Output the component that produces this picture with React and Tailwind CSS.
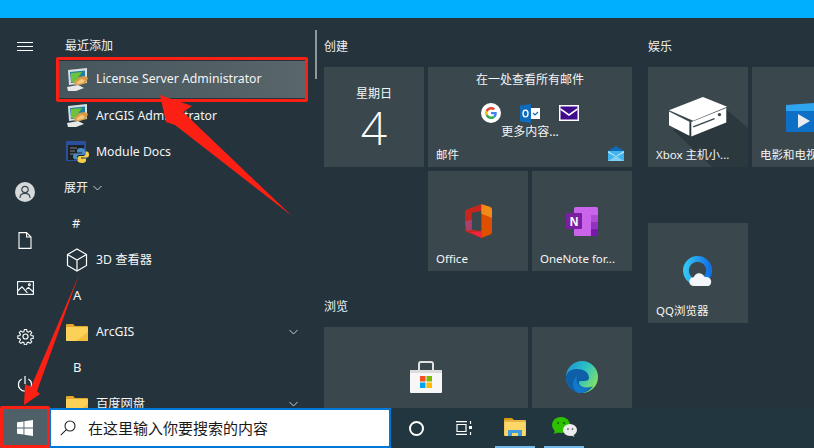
import React from 'react';

const FONT = "font-['Noto_Sans','Noto_Sans_CJK_SC',sans-serif]";

const Hamburger = () => (
  <svg width="16" height="9" viewBox="0 0 16 9" fill="none" stroke="#fff" strokeWidth="1">
    <path d="M0 .5h16M0 4.5h16M0 8.5h16" />
  </svg>
);

const UserAvatar = () => (
  <div className="w-5 h-5 rounded-full bg-[#d6d9da] flex items-center justify-center">
    <svg width="12" height="14" viewBox="0 0 12 14" fill="none" stroke="#3b474d" strokeWidth="1.2">
      <circle cx="6" cy="4.5" r="3.2" />
      <path d="M1 13c0-3 2-4.600 5-4.600s5 1.600 5 4.600" />
    </svg>
  </div>
);

const DocIcon = () => (
  <svg width="14" height="17" viewBox="0 0 14 17" fill="none" stroke="#fff" strokeWidth="1.1">
    <path d="M1 .6h7.6L13 5v11.4H1zM8.6.6V5H13" />
  </svg>
);

const PictureIcon = () => (
  <svg width="17" height="14" viewBox="0 0 17 14" fill="none" stroke="#fff" strokeWidth="1.1">
    <rect x=".6" y=".6" width="15.8" height="12.8" />
    <path d="M.6 10l4.400-4.200 5.400 6M9 8.600l2.400-2.200 5 4.600" />
    <circle cx="12.4" cy="3.8" r=".9" />
  </svg>
);

const GearIcon = () => (
  <svg width="17" height="17" viewBox="0 0 24 24" fill="none" stroke="#fff" strokeWidth="1.6">
    <circle cx="12" cy="12" r="3.6" />
    <path d="M10.300 1.500h3.400l.6 3.200 1.900.8 2.700-1.800 2.400 2.400-1.800 2.700.8 1.900 3.200.6v3.400l-3.200.6-.8 1.900 1.800 2.700-2.400 2.400-2.700-1.800-1.900.8-.6 3.200h-3.400l-.6-3.200-1.900-.8-2.700 1.800-2.400-2.400 1.800-2.700-.8-1.900-3.200-.6v-3.400l3.200-.6.8-1.900-1.800-2.700 2.400-2.400 2.700 1.800 1.900-.8z" transform="translate(.6 .6) scale(.95)" />
  </svg>
);

const PowerIcon = () => (
  <svg width="16" height="17" viewBox="0 0 16 17" fill="none" stroke="#fff" strokeWidth="1.2">
    <path d="M8 0v8" />
    <path d="M4.600 3a6.600 6.600 0 1 0 6.800 0" />
  </svg>
);

const ComputerIcon = () => (
  <svg width="24" height="24" viewBox="0 0 24 24">
    <path d="M3 2l19-2v15L4 17z" fill="#d9dfe0" />
    <path d="M5 4l15-1.600v10.800L6 15z" fill="#1f7fa0" />
    <path d="M6 5l11-1-7 10H6z" fill="#6fc23c" />
    <path d="M2 19l11-2 6 3-8 3H3z" fill="#e8eaea" />
    <path d="M9 14l5-5 6-1 3 2-2 5-6 2-5 0z" fill="#d99a45" />
    <path d="M11 15l5-4 4 1-2 3-5 1z" fill="#f1c77a" />
  </svg>
);

const PythonDocIcon = () => (
  <svg width="24" height="24" viewBox="0 0 24 24">
    <rect x="1" y="1" width="20" height="20" fill="#2b4f9c" />
    <rect x="3" y="5" width="16" height="15" fill="#1c2226" />
    <path d="M5 8h7M5 11h5M5 14h6" stroke="#7d8589" strokeWidth="1" />
    <path d="M16 8c-3 0-4 1-4 2.500v2h5v1h-6c-2 0-3 1-3 3s1 3 2.500 3H12v-2.500c0-1 1-2 2-2h4c1 0 2-1 2-2v-2.500C20 9 18.500 8 16 8z" fill="#4a8dc9" />
    <path d="M17 23c3 0 4-1 4-2.500v-2h-5v-1h6c1.500 0 2-1 2-3s-1-3-2-3h-1.500v2.500c0 1-1 2-2 2h-4c-1 0-2 1-2 2v2.500c0 1.500 2 2.500 4.500 2.500z" fill="#f5cf48" />
  </svg>
);

const CubeIcon = () => (
  <svg width="22" height="24" viewBox="0 0 22 24" fill="none" stroke="#fff" strokeWidth="1.2">
    <path d="M11 1l9.500 5.500v11L11 23 1.500 17.500v-11z" />
    <path d="M1.500 6.500L11 12l9.500-5.500M11 12v11" />
  </svg>
);

const FolderIcon = () => (
  <svg width="22" height="18" viewBox="0 0 22 18">
    <path d="M0 2a1 1 0 0 1 1-1h6l2 2h12a1 1 0 0 1 1 1v13a1 1 0 0 1-1 1H1a1 1 0 0 1-1-1z" fill="#e3a92e" />
    <rect x="0" y="4" width="22" height="14" rx="1" fill="#fbd257" />
    <path d="M22 9v8a1 1 0 0 1-1 1H10z" fill="#f2bd3a" />
  </svg>
);

const Chevron = () => (
  <svg width="9" height="6" viewBox="0 0 9 6" fill="none" stroke="#c8cdcf" strokeWidth="1">
    <path d="M.5 1l4 4 4-4" />
  </svg>
);

const GoogleIcon = () => (
  <svg width="20" height="20" viewBox="0 0 20 20">
    <circle cx="10" cy="10" r="10" fill="#fff" />
    <path d="M15.800 10.200c0-.5 0-.9-.1-1.300H10v2.400h3.300c-.2.800-.6 1.400-1.200 1.800l2 1.500c1.100-1 1.700-2.500 1.700-4.400z" fill="#4285f4" />
    <path d="M10 16c1.600 0 3-.5 4-1.500l-2-1.500c-.5.400-1.200.600-2 .600-1.600 0-2.900-1-3.300-2.500l-2 1.600C5.700 14.700 7.700 16 10 16z" fill="#34a853" />
    <path d="M6.700 11.100c-.2-.7-.2-1.500 0-2.200l-2-1.600c-.9 1.700-.9 3.700 0 5.400z" fill="#fbbc05" />
    <path d="M10 6.400c.9 0 1.700.3 2.300.9l1.800-1.800C13 4.500 11.600 4 10 4 7.700 4 5.700 5.300 4.700 7.300l2 1.600C7.100 7.400 8.400 6.400 10 6.400z" fill="#ea4335" />
  </svg>
);

const OutlookIcon = () => (
  <svg width="20" height="19" viewBox="0 0 20 19">
    <rect x="8" y="4" width="12" height="11" fill="#fff" />
    <path d="M13 9l2 2 3-3" stroke="#0f6cbd" strokeWidth="1.200" fill="none" />
    <path d="M0 1.500L11 0v19L0 17.500z" fill="#0f6cbd" />
    <ellipse cx="5.500" cy="9.500" rx="2.500" ry="3.400" fill="none" stroke="#fff" strokeWidth="1.400" />
  </svg>
);

const YahooMailIcon = () => (
  <svg width="20" height="16" viewBox="0 0 20 16">
    <rect width="20" height="16" fill="#fff" />
    <rect x="1.500" y="1.500" width="17" height="13" fill="#3f0a8c" />
    <path d="M1.500 3L10 9l8.500-6v2L10 11 1.500 5z" fill="#fff" />
  </svg>
);

const MailIcon = () => (
  <svg width="16" height="15" viewBox="0 0 16 15">
    <path d="M0 5l8-5 8 5z" fill="#0f6cbd" />
    <rect y="5" width="16" height="10" fill="#40b4ec" />
    <path d="M0 5l8 5 8-5v1.500L8 11 0 6.500z" fill="#bfe6f8" />
    <path d="M0 15l8-5 8 5z" fill="#7fd0f2" />
  </svg>
);

const OfficeIcon = () => (
  <svg width="27" height="34" viewBox="0 0 28 35">
    <path d="M17 0L2 5.500C.8 6 0 7 0 8.300v18c0 1.200.7 2.300 2 2.700l15 6V28l-10-1.500V9L17 7z" fill="#c8261c" />
    <path d="M0 18l7-2v10.500l-5 1.500z" fill="#a7416f" />
    <path d="M5 29l12-1v7z" fill="#f0243c" />
    <path d="M17 0l8.500 2.700C27 3.200 28 4.300 28 5.800v23c0 1.400-1 2.600-2.500 3L17 35z" fill="#e04e00" />
    <path d="M17 0l8.500 2.700C27 3.200 28 4.300 28 5.800V14L17 10z" fill="#f28a1a" />
  </svg>
);

const OneNoteIcon = () => (
  <svg width="32" height="29" viewBox="0 0 32 29">
    <rect x="8" y="0" width="24" height="29" rx="1.500" fill="#ca64ea" />
    <rect x="25" y="8" width="7" height="7" fill="#ae4bd5" />
    <rect x="25" y="15" width="7" height="7" fill="#9332bf" />
    <rect x="25" y="22" width="7" height="7" fill="#7719aa" />
    <rect x="0" y="6" width="16" height="16" rx="1" fill="#7b1fa2" />
    <text x="8" y="18.500" textAnchor="middle" fontSize="12" fontWeight="700" fill="#fff" fontFamily="Liberation Sans">N</text>
  </svg>
);

// box plus its long shadow, drawn over the whole tile
const XboxBox = () => (
  <svg width="100" height="100" viewBox="0 0 100 100">
    <path d="M25 63L64 100h36V61L79 43z" fill="#2b383e" />
    <g transform="translate(21 30) scale(.97 .88)">
      <path d="M0 15L35 0l25 11-35 16z" fill="#fff" />
      <path d="M0 16.500l21 11.500v16L0 32z" fill="#fff" />
      <path d="M23 28.500l36-16V29L23 45z" fill="#fff" />
      <circle cx="52" cy="20" r="1.800" fill="#3a484e" />
      <path d="M25 34l22-9.500" stroke="#3a484e" strokeWidth="1.600" />
    </g>
  </svg>
);

const MoviesIcon = () => (
  <svg width="32" height="29" viewBox="0 0 32 29">
    <rect y="2" width="32" height="27" rx="1" fill="#0d6fc6" />
    <path d="M0 2l28-2v8H0z" fill="#2fa4ef" />
    <path d="M12 11l12 7-12 7z" fill="#e8ecef" />
  </svg>
);

const QQBrowser = () => (
  <svg width="31" height="31" viewBox="0 0 32 32">
    <defs>
      <linearGradient id="qq" x1="0" y1="0" x2="1" y2="0">
        <stop offset="0" stopColor="#35c2f4" />
        <stop offset="1" stopColor="#1273e8" />
      </linearGradient>
    </defs>
    <circle cx="15" cy="15" r="12" fill="none" stroke="url(#qq)" strokeWidth="6" />
    <path d="M11 31a4.500 4.500 0 0 1 0-9c1-3 4-5 7-4 2 .5 4 2 4.500 4 2.500-1 6 .5 6.500 3.500.5 3-1 5.500-4 5.500z" fill="#f3f6f8" />
  </svg>
);

const StoreIcon = () => (
  <svg width="32" height="32" viewBox="0 0 32 32">
    <path d="M9 10V3a2 2 0 0 1 2-2h10a2 2 0 0 1 2 2v7" fill="none" stroke="#e0e0e0" strokeWidth="2" />
    <rect y="9" width="32" height="23" rx="1" fill="#f7f7f7" />
    <rect y="9" width="32" height="3" fill="#dcdcdc" />
    <rect x="10" y="15" width="5.500" height="5.500" fill="#f25022" />
    <rect x="16.500" y="15" width="5.500" height="5.500" fill="#7fba00" />
    <rect x="10" y="21.500" width="5.500" height="5.500" fill="#00a4ef" />
    <rect x="16.500" y="21.500" width="5.500" height="5.500" fill="#ffb900" />
  </svg>
);

const EdgeIcon = () => (
  <svg width="32" height="32" viewBox="0 0 32 32">
    <defs>
      <linearGradient id="edge" x1="0" y1="0" x2="1" y2=".6">
        <stop offset="0" stopColor="#1b8fd8" />
        <stop offset=".55" stopColor="#2cc1c4" />
        <stop offset="1" stopColor="#7fe068" />
      </linearGradient>
    </defs>
    <circle cx="16" cy="16" r="16" fill="url(#edge)" />
    <path d="M0 16c1-6 6-8 11-8 6 0 12 3 12 9 0 2-2 3-5 3h-4c-1 0-2 3 1 5 3 2 8 2 12 0-3 4-7 7-12 7C7 32 0 25 0 16z" fill="#0f5ea8" />
    <path d="M12 32C6 28 5 20 11 15c-1 4 0 8 3 10 2 2 6 3 10 2-3 3-7 5-12 5z" fill="#1177c9" />
  </svg>
);

const StartLogo = () => (
  <svg width="16" height="16" viewBox="0 0 16 16" fill="#fff">
    <path d="M0 2.300L6.500 1.400v6.200H0zM7.400 1.300L16 0v7.600H7.400zM0 8.400h6.500v6.200L0 13.700zM7.400 8.400H16V16l-8.600-1.300z" />
  </svg>
);

const SearchIcon = () => (
  <svg width="16" height="16" viewBox="0 0 16 16" fill="none" stroke="#222" strokeWidth="1.100">
    <circle cx="10" cy="6" r="5" />
    <path d="M6.300 9.700L.8 15.200" />
  </svg>
);

const TaskViewIcon = () => (
  <svg width="16" height="14" viewBox="0 0 16 14" fill="none" stroke="#fff" strokeWidth="1.200">
    <path d="M0 .6h11M0 13.400h11M1 3.500h9v7H1zM14.500 0v3M14.500 11v3" />
    <rect x="13" y="5" width="3" height="3" fill="#fff" stroke="none" />
  </svg>
);

const ExplorerIcon = () => (
  <svg width="22" height="18" viewBox="0 0 22 18">
    <path d="M0 1a1 1 0 0 1 1-1h7l2 2v2H0z" fill="#d99b0c" />
    <rect y="2" width="22" height="16" rx="1" fill="#e6b54a" />
    <rect x="0.500" y="4" width="21" height="14" rx="1" fill="#fdd868" />
    <path d="M4 18v-6h14v6h-4v-3H8v3z" fill="#3f9bdc" />
  </svg>
);

const WeChatIcon = () => (
  <svg width="25" height="20" viewBox="0 0 25 20">
    <ellipse cx="9" cy="8" rx="9" ry="8" fill="#2dc100" />
    <path d="M3 13l-1 4 5-2z" fill="#2dc100" />
    <circle cx="6" cy="6" r="1.200" fill="#1a7d00" />
    <circle cx="12" cy="6" r="1.200" fill="#1a7d00" />
    <ellipse cx="18" cy="13" rx="7" ry="6" fill="#ececec" />
    <path d="M21 17l1.500 3-4-2z" fill="#ececec" />
    <circle cx="16" cy="12" r="1" fill="#777" />
    <circle cx="20.500" cy="12" r="1" fill="#777" />
  </svg>
);

const RailItem = ({ children }) => (
  <div className="h-12 flex items-center justify-center">{children}</div>
);

const ListRow = ({ icon, label, chevron, active }) => (
  <div
    className={`flex items-center pl-[7px] pr-[8px] text-[12.25px] text-[#f4f5f5] ${
      active ? 'h-[37px] bg-gradient-to-r from-[#46565c] to-[#59666b]' : 'h-9'
    }`}
  >
    <div className="w-6 h-6 flex items-center justify-center shrink-0">{icon}</div>
    <span className="ml-[7px] flex-1 leading-none whitespace-nowrap">{label}</span>
    {chevron && <Chevron />}
  </div>
);

const LetterRow = ({ children }) => (
  <div className="h-9 flex items-center pl-[15px] text-[13px] text-[#f4f5f5]">{children}</div>
);

const Tile = ({ className = '', label, children }) => (
  <div className={`relative bg-[#3a484e] overflow-hidden flex items-center justify-center shrink-0 ${className}`}>
    {children}
    {label && (
      <span className="absolute left-2 bottom-[3px] text-[11.5px] leading-[18px] text-[#f4f5f5] whitespace-nowrap">{label}</span>
    )}
  </div>
);

const GroupTitle = ({ children }) => (
  <div className="h-[21px] text-[12px] leading-[21px] text-[#f0f2f2]">{children}</div>
);

const App = () => {
  return (
    <div className={`relative w-[814px] h-[448px] overflow-hidden flex flex-col bg-[#25343c] ${FONT}`}>
      <div className="h-[18px] bg-[#00b0ff]" />

      <div className="flex flex-1 min-h-0">
        <div className="w-[50px] shrink-0 flex flex-col justify-between">
          <div className="h-14 flex items-center justify-center">
            <Hamburger />
          </div>
          <div className="flex flex-col">
            <RailItem><UserAvatar /></RailItem>
            <RailItem><DocIcon /></RailItem>
            <RailItem><PictureIcon /></RailItem>
            <RailItem><GearIcon /></RailItem>
            <RailItem><PowerIcon /></RailItem>
          </div>
        </div>

        <div className="w-[248px] ml-[8px] shrink-0 h-[404px] pt-[13px]">
          <div className="h-[30px] flex items-center pl-[7px] text-[12px] text-[#f0f2f2]">最近添加</div>
          <ListRow active icon={<ComputerIcon />} label="License Server Administrator" />
          <ListRow icon={<ComputerIcon />} label="ArcGIS Administrator" />
          <ListRow icon={<PythonDocIcon />} label="Module Docs" />
          <div className="h-9 flex items-center gap-[5px] pl-[6px] text-[12px] text-[#f4f5f5]">
            展开
            <Chevron />
          </div>
          <LetterRow><span className="-ml-[1px]">#</span></LetterRow>
          <ListRow icon={<CubeIcon />} label="3D 查看器" />
          <LetterRow>A</LetterRow>
          <ListRow icon={<FolderIcon />} label="ArcGIS" chevron />
          <LetterRow>B</LetterRow>
          <ListRow icon={<FolderIcon />} label="百度网盘" chevron />
        </div>

        <div className="ml-[9px] mt-[12px] w-[2px] h-[49px] bg-[#8f999d] shrink-0" />

        <div className="ml-[7px] flex gap-4 pt-[18px] shrink-0">
          <div className="w-[308px] flex flex-col">
            <GroupTitle>创建</GroupTitle>
            <div className="mt-[10px] flex gap-1">
              <Tile className="w-[100px] h-[100px] flex-col justify-start">
                <span className="mt-[18px] text-[12px] leading-[18px] text-[#f4f5f5]">星期日</span>
                <span className="-mt-[1px] text-[46px] leading-[50px] font-light text-white font-['Open_Sans',sans-serif]">4</span>
              </Tile>
              <Tile className="w-[204px] h-[100px] flex-col justify-start" label="邮件">
                <span className="mt-[4px] text-[12px] leading-[18px] text-[#f4f5f5]">在一处查看所有邮件</span>
                <div className="mt-[14px] flex items-center gap-[19px]">
                  <GoogleIcon />
                  <OutlookIcon />
                  <YahooMailIcon />
                </div>
                <span className="mt-[1px] text-[12px] leading-[16px] text-[#f4f5f5]">更多内容...</span>
                <div className="absolute right-2 bottom-[6px]"><MailIcon /></div>
              </Tile>
            </div>
            <div className="mt-1 ml-[104px] flex gap-1">
              <Tile className="w-[100px] h-[100px]" label="Office"><OfficeIcon /></Tile>
              <Tile className="w-[100px] h-[100px]" label="OneNote for..."><OneNoteIcon /></Tile>
            </div>
            <div className="mt-[25px]"><GroupTitle>浏览</GroupTitle></div>
            <div className="mt-[10px] flex gap-1">
              <Tile className="w-[204px] h-[100px]"><StoreIcon /></Tile>
              <Tile className="w-[100px] h-[100px]"><EdgeIcon /></Tile>
            </div>
          </div>

          <div className="w-[204px] flex flex-col">
            <GroupTitle>娱乐</GroupTitle>
            <div className="mt-[10px] flex gap-1">
              <Tile className="w-[100px] h-[100px]" label="Xbox 主机小..."><XboxBox /></Tile>
              <Tile className="w-[100px] h-[100px]" label="电影和电视"><MoviesIcon /></Tile>
            </div>
            <Tile className="mt-14 w-[100px] h-[100px] pb-[4px]" label="QQ浏览器"><QQBrowser /></Tile>
          </div>
        </div>
      </div>

      <div className="relative h-10 shrink-0 flex items-stretch bg-[#21363f]">
        <div className="w-[49px] bg-[#4f6068] flex items-center justify-center"><StartLogo /></div>
        <div className="w-[342px] bg-white border-2 border-[#0078d7] flex items-center pl-[9px]">
          <SearchIcon />
          <span className="ml-[12px] text-[15px] leading-none text-[#1a1a1a] whitespace-nowrap">在这里输入你要搜索的内容</span>
        </div>
        <div className="w-[50px] flex items-center justify-center"><div className="w-[15px] h-[15px] rounded-full border-2 border-white" /></div>
        <div className="w-[45px] flex items-center justify-center"><TaskViewIcon /></div>
        <div className="ml-[9px] w-[40px] flex items-center justify-center border-b-2 border-[#76b9ed]"><ExplorerIcon /></div>
        <div className="ml-[9px] w-[40px] flex items-center justify-center border-b-2 border-[#76b9ed]"><WeChatIcon /></div>
      </div>

      {/* annotations drawn on top of the screenshot */}
      <div className="absolute left-[56px] top-[57px] w-[252px] h-[45px] border-[3px] border-[#fb1f14] rounded-[2px]" />
      <div className="absolute left-0 top-[406px] w-[50px] h-[42px] border-[3px] border-[#fb1f14] rounded-[2px]" />
      <svg className="absolute left-0 top-0 pointer-events-none" width="814" height="448" viewBox="0 0 814 448">
        <path d="M160 95L192 106 183 112 292 216 175 125 166 122z" fill="#fb1f14" />
        <path d="M79 275L37 391 40 394 24 405 25 384 31 387z" fill="#fb1f14" />
      </svg>
    </div>
  );
};

export default App;
